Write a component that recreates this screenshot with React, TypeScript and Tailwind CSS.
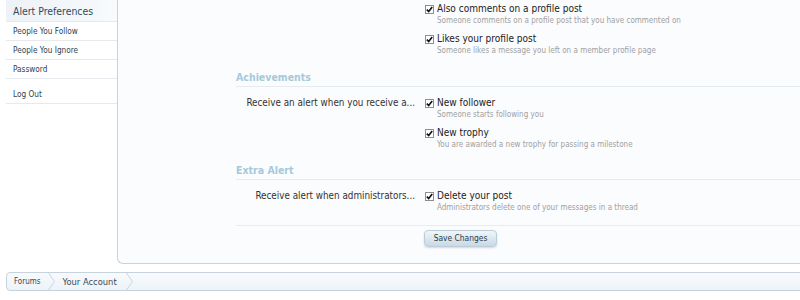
import React from "react";

const Check = () => (
  <span className="flex h-[9px] w-[9px] shrink-0 items-center justify-center border border-[#8e8e8e] bg-white">
    <svg width="7" height="7" viewBox="0 0 7 7">
      <path d="M0.8 3.6 L2.7 5.6 L6.2 0.9" stroke="#111" strokeWidth="1.6" fill="none" />
    </svg>
  </span>
);

type Opt = { title: string; desc: string };

const Option = ({ title, desc }: Opt) => (
  <div className="mb-[6px]">
    <div className="flex h-[12px] items-center gap-[3px] text-[10px] leading-[12px] text-[#222]">
      <Check />
      <span>{title}</span>
    </div>
    <div className="pl-[12px] text-[8px] leading-[12px] text-[#a0a0a0]">{desc}</div>
  </div>
);

const Row = ({ label, options, className = "" }: { label?: string; options: Opt[]; className?: string }) => (
  <div className={"grid grid-cols-[179px_1fr] gap-x-[10px] " + className}>
    <div className="text-right text-[9.8px] leading-[12px] text-[#333]">{label}</div>
    <div>
      {options.map((o) => (
        <Option key={o.title} {...o} />
      ))}
    </div>
  </div>
);

const Heading = ({ children, className = "" }: { children: React.ReactNode; className?: string }) => (
  <h3
    className={
      "border-b border-[#e3ebf0] pb-[2px] text-[10.5px] font-bold leading-[14px] text-[#a6c9da] " + className
    }
  >
    {children}
  </h3>
);

const Chevron = () => (
  <svg width="7" height="17" viewBox="0 0 7 17" className="shrink-0">
    <path d="M0.5 0 L6.5 8.5 L0.5 17" stroke="#c9d5df" strokeWidth="1" fill="none" />
  </svg>
);

const sideItems = ["People You Follow", "People You Ignore", "Password"];

export default function App() {
  return (
    <div className="h-[300px] w-[800px] overflow-hidden bg-white pl-[6px] font-['DejaVu_Sans_Condensed','Liberation_Sans',sans-serif]">
      <div className="flex h-[264px]">
        {/* sidebar */}
        <div className="w-[111px] shrink-0 bg-white">
          <div className="flex h-[22px] items-center border-b border-[#e4e9ee] bg-gradient-to-r from-[#edf2f7] to-[#f8fafc] pl-[7px] pt-[3px] text-[10.4px] text-[#2d4a60]">
            Alert Preferences
          </div>
          {sideItems.map((s) => (
            <div
              key={s}
              className="flex h-[19px] items-center border-b border-[#e6eaee] pl-[7px] pt-[1px] text-[8.2px] text-[#2f3f4f]"
            >
              {s}
            </div>
          ))}
          <div className="mt-[6px] flex h-[19px] items-center border-b border-[#e6eaee] pl-[7px] pt-[1px] text-[8.2px] text-[#2f3f4f]">
            Log Out
          </div>
        </div>

        {/* main panel */}
        <div className="-mr-[30px] flex-1 rounded-bl-[6px] border-b border-l border-[#c8d3dc] bg-[#fbfcfe] pl-[118px] pt-[3px]">
          <Row
            options={[
              {
                title: "Also comments on a profile post",
                desc: "Someone comments on a profile post that you have commented on",
              },
              {
                title: "Likes your profile post",
                desc: "Someone likes a message you left on a member profile page",
              },
            ]}
          />
          <Heading className="mt-[7px]">Achievements</Heading>
          <Row
            className="mt-[10px]"
            label="Receive an alert when you receive a..."
            options={[
              { title: "New follower", desc: "Someone starts following you" },
              { title: "New trophy", desc: "You are awarded a new trophy for passing a milestone" },
            ]}
          />
          <Heading className="mt-[6px]">Extra Alert</Heading>
          <Row
            className="mt-[10px]"
            label="Receive alert when administrators..."
            options={[{ title: "Delete your post", desc: "Administrators delete one of your messages in a thread" }]}
          />
          <div className="mt-[5px] flex border-t border-[#e6ecf0] pt-[4px]">
            <button className="ml-[188px] h-[17px] w-[73px] rounded-[4px] border border-[#bccdda] bg-gradient-to-b from-[#f1f6fa] to-[#c8d9e6] text-[8.4px] leading-[15px] text-[#2b3c4a] shadow-[0_1px_2px_rgba(0,0,0,0.15)]">
              Save Changes
            </button>
          </div>
        </div>
      </div>

      {/* breadcrumb */}
      <div className="-mr-[30px] mt-[8px] flex h-[19px] items-center rounded-l-[4px] border border-[#c6d2dc] bg-gradient-to-b from-[#f8fafd] to-[#edf3f8] text-[#3a4a58]">
        <span className="pl-[7px] pr-[7px] text-[8px]">Forums</span>
        <Chevron />
        <span className="pl-[8px] pr-[9px] text-[9.3px]">Your Account</span>
        <Chevron />
      </div>
    </div>
  );
}
